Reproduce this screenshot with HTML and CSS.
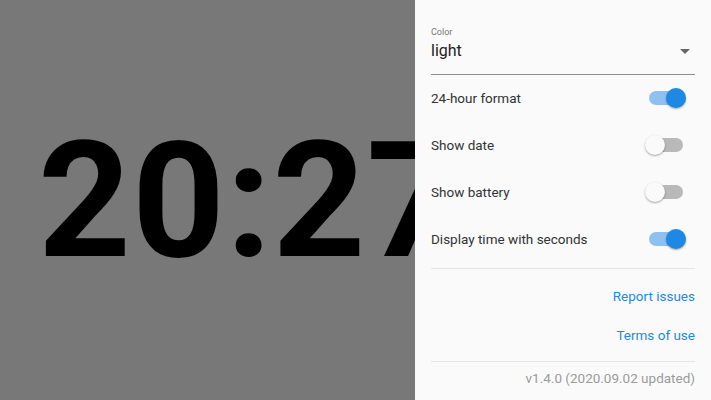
FILE: index.html
```html
<!DOCTYPE html>
<html>
<head>
<meta charset="utf-8">
<link rel="stylesheet" href="styles.css">
</head>
<body>
<div class="app">
  <div class="clock"><span class="time">20:27</span></div>
  <aside class="panel">
    <div class="select">
      <div class="select-label">Color</div>
      <div class="select-value">
        <span>light</span>
        <svg class="caret" width="10" height="5" viewBox="0 0 10 5"><path d="M0 0h10L5 5z" fill="#666"/></svg>
      </div>
    </div>
    <div class="rows">
      <div class="row"><span>24-hour format</span><span class="switch on"><span class="thumb"></span></span></div>
      <div class="row"><span>Show date</span><span class="switch"><span class="thumb"></span></span></div>
      <div class="row"><span>Show battery</span><span class="switch"><span class="thumb"></span></span></div>
      <div class="row"><span>Display time with seconds</span><span class="switch on"><span class="thumb"></span></span></div>
    </div>
    <hr class="divider">
    <a class="link first">Report issues</a>
    <a class="link second">Terms of use</a>
    <hr class="divider low">
    <div class="version">v1.4.0 (2020.09.02 updated)</div>
  </aside>
</div>
</body>
</html>
```

FILE: styles.css
```css
html, body { margin: 0; padding: 0; }
body { width: 711px; height: 400px; overflow: hidden; font-family: Roboto, "Noto Sans", sans-serif; }
.app { display: flex; width: 711px; height: 400px; }
.clock { flex: 0 0 415px; background: #787878; overflow: hidden; display: flex; align-items: center; }
.time { font-weight: 700; font-size: 162px; color: #000; margin-left: 38px; letter-spacing: 1px; white-space: nowrap; line-height: 1; margin-top: 2px; }
.panel { flex: 1; background: #fafafa; padding: 0 16px; display: flex; flex-direction: column; }
.select { padding-top: 27px; border-bottom: 1px solid #8e8e8e; padding-bottom: 12px; }
.select-label { font-size: 9px; color: #777; line-height: 11px; }
.select-value { display: flex; justify-content: space-between; align-items: center; font-size: 16px; color: #222; line-height: 22px; margin-top: 2px; }
.caret { margin-right: 5px; }
.rows { display: flex; flex-direction: column; margin-top: -1px; }
.row { display: flex; justify-content: space-between; align-items: center; height: 47px; font-size: 13.5px; color: #333; }
.switch { position: relative; width: 34px; height: 14px; border-radius: 7px; background: #b9b9b9; margin-right: 12px; }
.switch .thumb { position: absolute; top: -3px; left: -4px; width: 20px; height: 20px; border-radius: 50%; background: #fafafa; box-shadow: 0 1px 2px rgba(0,0,0,0.35); }
.switch.on { background: #8ec1f0; }
.switch.on .thumb { left: 17px; background: #1e88e5; }
.divider { border: 0; border-top: 1px solid #e4e4e4; margin: 6px 0 0; }
.link { align-self: flex-end; font-size: 13.5px; color: #1e88e5; line-height: 16px; }
.link.first { margin-top: 19px; }
.link.second { margin-top: 23px; }
.divider.low { margin-top: 18px; }
.version { align-self: flex-end; font-size: 13.5px; color: #9a9a9a; margin-top: 8px; line-height: 16px; }
```
